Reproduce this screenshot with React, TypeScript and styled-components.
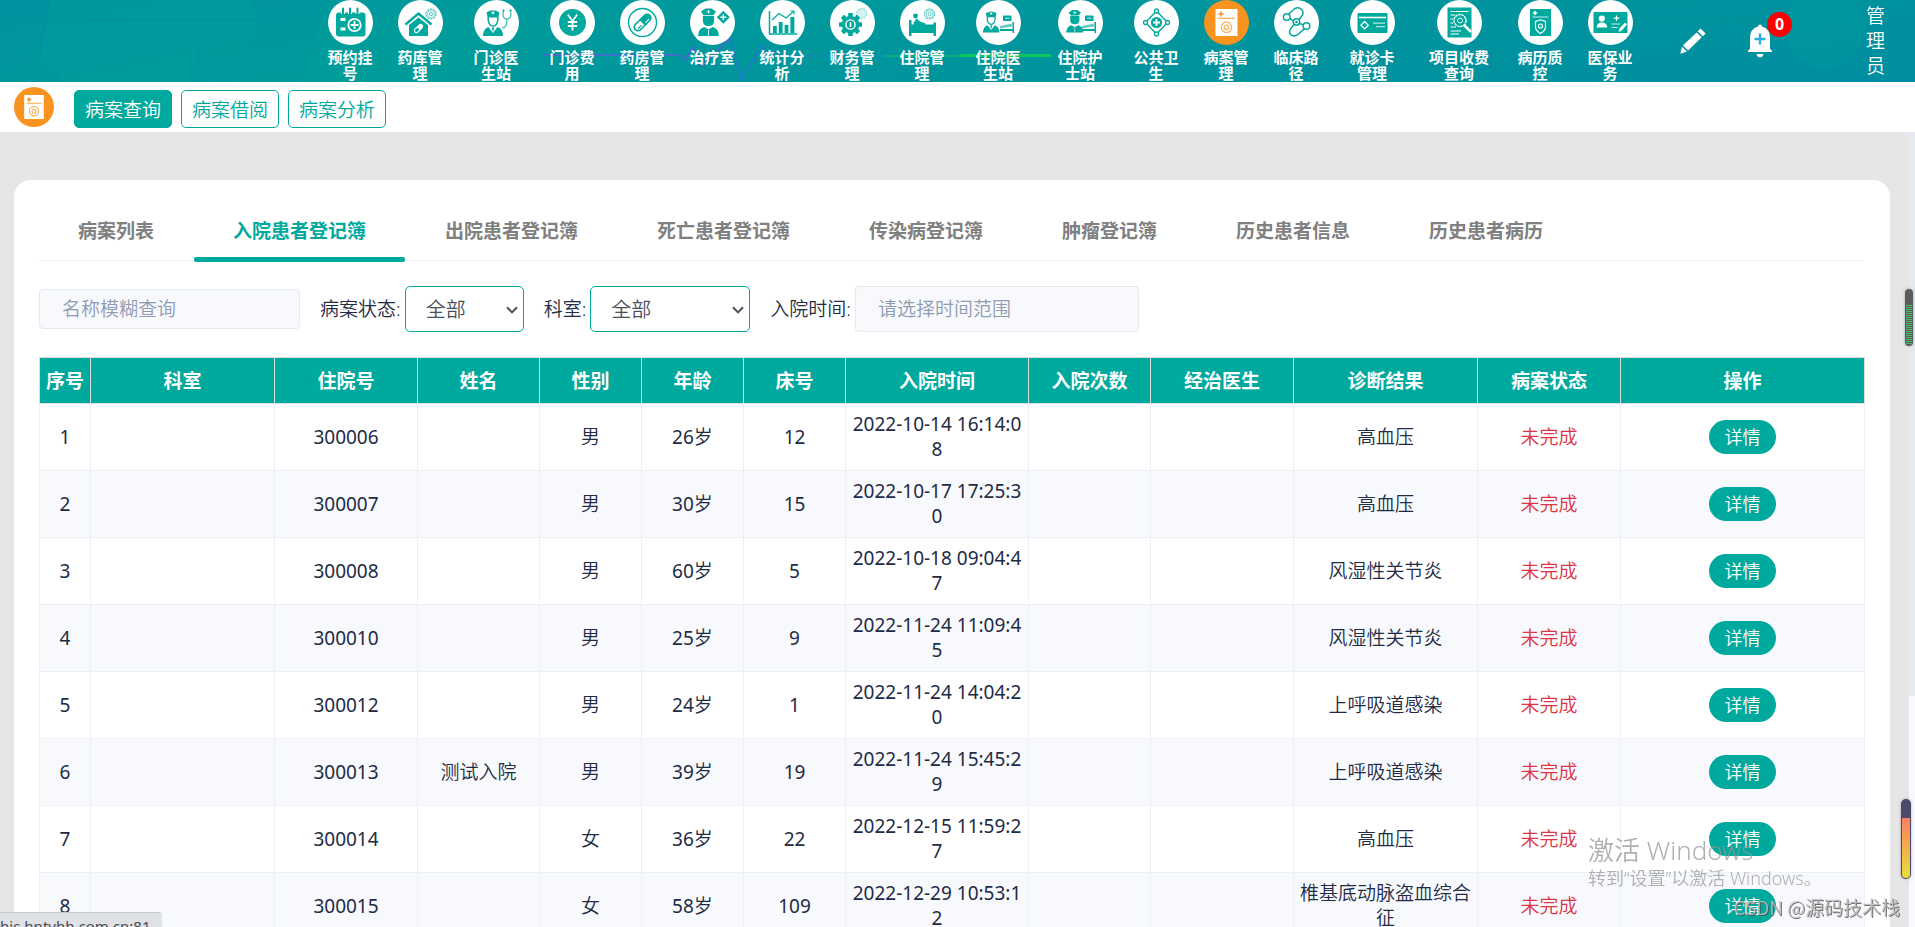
import React from 'react';
import styled, { createGlobalStyle } from 'styled-components';

const TEAL = '#00a99d';
const ORANGE = '#f7931e';
const INK = '#222b45';
const LINE = '#edf1f7';

const GlobalStyle = createGlobalStyle`
  *, *::before, *::after { box-sizing: border-box; }
  body {
    margin: 0;
    background: #e6e6e6;
    color: ${INK};
    font-family: 'Noto Sans', 'Noto Sans CJK SC', sans-serif;
    font-size: 19px;
    font-weight: 350;
    line-height: 25px;
  }
  button, input, select { font: inherit; }
`;

const Page = styled.div`
  display: flex;
  flex-direction: column;
  height: 100vh;
  overflow: hidden;
`;

/* ---------- top bar ---------- */

const TopBar = styled.header`
  position: relative;
  display: flex;
  flex: none;
  height: 82px;
  padding-left: 315px;
  overflow: hidden;
  background: linear-gradient(170deg, #0092a0 0%, #009a9b 30%, #00949d 60%, #008ea0 100%);
`;

const Backdrop = styled.svg`
  position: absolute;
  top: 0;
  left: 0;
`;

const ModuleNav = styled.nav`
  position: relative;
  display: flex;
`;

const ModuleLink = styled.a<{ $width: number }>`
  display: flex;
  flex: none;
  flex-direction: column;
  align-items: center;
  gap: 4px;
  width: ${(p) => p.$width}px;
  color: #fff;
  text-decoration: none;
`;

const ModuleLabel = styled.span<{ $chars: number }>`
  width: ${(p) => p.$chars}em;
  font-size: 15px;
  font-weight: 700;
  line-height: 16px;
  text-align: center;
`;

const TopTools = styled.div`
  position: relative;
  display: flex;
  flex: 1;
  align-items: center;
  justify-content: flex-end;
  padding-right: 29px;
`;

const ToolButton = styled.button<{ $gap: number }>`
  position: relative;
  display: flex;
  margin: 0 ${(p) => p.$gap}px 0 0;
  padding: 0;
  border: 0;
  background: none;
  cursor: pointer;
`;

const Badge = styled.span`
  position: absolute;
  top: -12px;
  right: -20px;
  width: 25px;
  height: 25px;
  border-radius: 50%;
  background: #f00;
  color: #fff;
  font-size: 16px;
  font-weight: 700;
  line-height: 25px;
  text-align: center;
`;

const UserName = styled.span`
  width: 20px;
  color: #fff;
`;

/* ---------- second bar ---------- */

const SubBar = styled.div`
  display: flex;
  flex: none;
  align-items: center;
  gap: 20px;
  height: 50px;
  padding-left: 14px;
  background: #fff;
`;

const SubBarIcon = styled.span`
  display: flex;
`;

const SubButtons = styled.div`
  display: flex;
  gap: 9px;
  padding-top: 4px;
`;

const SubButton = styled.button<{ $active?: boolean }>`
  height: 38px;
  padding: 2px 10px 0;
  border: 1px solid ${TEAL};
  border-radius: 5px;
  background: ${(p) => (p.$active ? TEAL : '#fff')};
  color: ${(p) => (p.$active ? '#fff' : TEAL)};
  cursor: pointer;
`;

/* ---------- content ---------- */

const Body = styled.div`
  display: flex;
  flex: 1;
  min-height: 0;
`;

const Scroller = styled.main`
  flex: 1;
  min-width: 0;
  overflow-y: auto;
  padding: 48px 19px 48px 14px;
  scrollbar-width: none;
`;

const ScrollTrack = styled.div`
  flex: none;
  width: 6px;
  background: #f7f9fc;
`;

const ScrollThumb = styled.div`
  height: 71%;
  background: #e4e9f2;
`;

const Card = styled.section`
  padding: 20px 26px 40px 25px;
  border-radius: 17px;
  background: #fff;
`;

const Tabs = styled.div`
  display: flex;
  gap: 1px;
  border-bottom: 1px solid ${LINE};
`;

const Tab = styled.button<{ $active?: boolean }>`
  position: relative;
  height: 60px;
  padding: 2px 39px 0;
  border: 0;
  background: none;
  color: ${(p) => (p.$active ? TEAL : '#808080')};
  font-weight: 700;
  cursor: pointer;

  &::after {
    content: '';
    display: ${(p) => (p.$active ? 'block' : 'none')};
    position: absolute;
    right: 0;
    bottom: -2px;
    left: 0;
    height: 5px;
    border-radius: 2px;
    background: ${TEAL};
  }
`;

const Filters = styled.form`
  display: flex;
  align-items: center;
  gap: 20px;
  margin: 25px 0;
`;

const Field = styled.label`
  display: flex;
  align-items: center;
  gap: 4px;
`;

const TextInput = styled.input<{ $width: number; $height: number }>`
  width: ${(p) => p.$width}px;
  height: ${(p) => p.$height}px;
  padding: 0 22px;
  border: 1px solid #e4e9f2;
  border-radius: 4px;
  background: #f7f9fc;
  color: ${INK};

  &::placeholder { color: #8f9bb3; opacity: 1; }
`;

const SelectBox = styled.span`
  position: relative;
  display: flex;
`;

const Select = styled.select<{ $width: number }>`
  width: ${(p) => p.$width}px;
  height: 46px;
  padding: 0 24px 0 20px;
  border: 1px solid ${TEAL};
  border-radius: 5px;
  appearance: none;
  background: #fff;
  color: #494f5c;
  font-size: 20px;
`;

const Chevron = styled.svg`
  position: absolute;
  top: 20px;
  right: 6px;
  pointer-events: none;
`;

const Table = styled.table`
  width: 100%;
  border-collapse: collapse;
  table-layout: fixed;
`;

const Th = styled.th`
  padding: 11px 4px 9px;
  border: 1px solid #ddd;
  background: ${TEAL};
  color: #fff;
  font-weight: 700;
  text-align: center;
  white-space: nowrap;
`;

const Td = styled.td<{ $danger?: boolean }>`
  height: 67px;
  padding: 8px 4px;
  border: 1px solid ${LINE};
  color: ${(p) => (p.$danger ? '#dc3545' : INK)};
  text-align: center;
  word-break: break-all;
`;

const Digits = styled.span`
  font-weight: 400;
`;

const Row = styled.tr`
  background: #fff;
  &:nth-child(even) { background: #f7f9fc; }
`;

const DetailButton = styled.button`
  width: 67px;
  height: 34px;
  padding: 0;
  border: 0;
  border-radius: 17px;
  background: ${TEAL};
  color: #fff;
  font-size: 18px;
  vertical-align: middle;
  cursor: pointer;
`;

/* ---------- overlays ---------- */

const StatusBubble = styled.div`
  position: fixed;
  bottom: 0;
  left: 0;
  width: 162px;
  height: 15px;
  overflow: hidden;
  padding-top: 3px;
  border-top: 1px solid #c8cace;
  border-radius: 0 4px 0 0;
  background: #dee1e6;
  color: #4a4d51;
  font-size: 15px;
  font-weight: 400;
  line-height: 20px;
  white-space: nowrap;
`;

const Activation = styled.div`
  position: fixed;
  right: 90px;
  bottom: 37px;
  width: 237px;
  color: rgba(150, 150, 150, 0.75);
  font-size: 18px;
  line-height: 24px;
  white-space: nowrap;
  pointer-events: none;
`;

const ActivationTitle = styled.div`
  font-size: 26px;
  line-height: 32px;
`;

const Signature = styled.div`
  position: fixed;
  right: 15px;
  bottom: 8px;
  color: rgba(190, 190, 190, 0.9);
  font-family: 'Noto Sans CJK SC', sans-serif;
  font-size: 19px;
  text-shadow: 1px 1px 0 rgba(80, 80, 80, 0.8);
  white-space: nowrap;
  pointer-events: none;
`;

const GreenMeter = styled.div`
  position: fixed;
  top: 289px;
  right: 2px;
  width: 8px;
  height: 57px;
  padding: 16px 1px 2px;
  border-radius: 4px;
  background: #5c5c5e;
  box-shadow: 0 0 3px rgba(0, 0, 0, 0.3);

  &::after {
    content: '';
    display: block;
    height: 100%;
    background: repeating-linear-gradient(#3cc168 0 1px, #5c5c5e 1px 2px);
  }
`;

const WarmMeter = styled.div`
  position: fixed;
  right: 4px;
  bottom: 48px;
  width: 10px;
  height: 80px;
  padding: 19px 1px 1px;
  border-radius: 5px;
  background: #4b4a6b;
  box-shadow: 0 0 3px rgba(0, 0, 0, 0.3);

  &::after {
    content: '';
    display: block;
    height: 100%;
    border-radius: 0 0 4px 4px;
    background: linear-gradient(#fa8060, #ecdf3b);
  }
`;

/* ---------- icon drawings, all on a 45 x 45 disc ---------- */

const toothedRing = (cx: number, cy: number, r: number, teeth: number) =>
  Array.from({ length: teeth }, (_, i) => (
    <rect key={i} x={cx - r * 0.2} y={cy - r} width={r * 0.4} height={r * 0.5} rx="0.5"
      transform={`rotate(${(360 / teeth) * i} ${cx} ${cy})`} />
  ));

const SmallGear = ({ x, y }: { x: number; y: number }) => (
  <g opacity="0.65">
    <circle cx={x} cy={y} r="5" fill="none" stroke={TEAL} strokeWidth="1.2" strokeDasharray="2.4 0.7" />
    <circle cx={x} cy={y} r="3.6" fill="none" stroke={TEAL} strokeWidth="0.7" />
    <circle cx={x} cy={y} r="1.6" fill="none" stroke={TEAL} strokeWidth="1" />
  </g>
);

const Doctor = ({ cx }: { cx: number }) => (
  <g fill={TEAL}>
    <path d={`M${cx - 6.5} 12.5 Q${cx} 8 ${cx + 6.5} 12.5 L${cx + 5.3} 17.4 H${cx - 5.3} Z`} />
    <path d={`M${cx - 4.8} 17 V20 Q${cx - 4} 26 ${cx} 26 Q${cx + 4} 26 ${cx + 4.8} 20 V17`} fill="none" stroke={TEAL} strokeWidth="1.5" />
    <path d={`M${cx - 10} 36 Q${cx - 10} 29 ${cx - 4.5} 27 L${cx} 33 L${cx + 4.5} 27 Q${cx + 10} 29 ${cx + 10} 36 Z`} />
    <path d={`M${cx - 1.4} 27.5 H${cx + 1.4} L${cx} 32 Z`} />
    <path d={`M${cx} 11 V14.6 M${cx - 1.8} 12.8 H${cx + 1.8}`} stroke="#fff" strokeWidth="0.9" />
  </g>
);

const Nurse = ({ cx }: { cx: number }) => (
  <g fill={TEAL}>
    <path d={`M${cx - 7.5} 11.5 L${cx - 3} 8.5 H${cx + 3} L${cx + 7.5} 11.5 L${cx + 5} 15.2 H${cx - 5} Z`} />
    <path d={`M${cx - 5.6} 16 H${cx + 5.6} V21 Q${cx + 5.6} 26 ${cx} 26 Q${cx - 5.6} 26 ${cx - 5.6} 21 Z`} />
    <path d={`M${cx - 10.5} 36 Q${cx - 10} 28 ${cx - 4} 27 L${cx} 29.5 L${cx + 4} 27 Q${cx + 10} 28 ${cx + 10.5} 36 Z`} />
    <path d={`M${cx} 10 V13.6 M${cx - 1.8} 11.8 H${cx + 1.8}`} stroke="#fff" strokeWidth="0.9" />
    <path d={`M${cx} 30 V36`} stroke="#fff" strokeWidth="0.8" />
  </g>
);

const SideBed = () => (
  <g fill={TEAL}>
    <rect x="27" y="15.5" width="8.5" height="5.5" rx="0.8" />
    <path d="M29 18.2 H33.5" stroke="#fff" strokeWidth="0.8" />
    <path d="M24 26 L36 23.5 V26.5 L24 28.4 Z" opacity="0.6" />
    <path d="M24 29 H37.5 V31 H24 Z M36.5 22 H38 V33 H36.5 Z" />
  </g>
);

type IconName =
  | 'calendar' | 'house' | 'doctor' | 'yen' | 'pill' | 'nurse' | 'chart' | 'gear' | 'bed'
  | 'doctorBed' | 'nurseBed' | 'network' | 'record' | 'route' | 'card' | 'audit' | 'shield' | 'idCard';

const drawings: Record<IconName, React.ReactNode> = {
  calendar: (
    <>
      <rect x="8" y="12.5" width="29.5" height="24" rx="3" fill={TEAL} />
      <path d="M15 9 V14 M22 9 V14 M29.5 9 V14" stroke="#fff" strokeWidth="4" />
      <path d="M15 8.5 V14 M22 8.5 V14 M29.5 8.5 V14" stroke={TEAL} strokeWidth="2" strokeLinecap="round" />
      <path d="M12.5 19.5 H17.5 M12.5 29 H17.5" stroke="#fff" strokeWidth="3" />
      <circle cx="26.5" cy="25" r="6.2" fill="none" stroke="#fff" strokeWidth="1.8" />
      <path d="M26.5 21 V29 M22.5 25 H30.5" stroke="#fff" strokeWidth="1.8" />
    </>
  ),
  house: (
    <>
      <path d="M7.5 24.5 L20.5 13.5 L33.5 24.5" fill="none" stroke={TEAL} strokeWidth="2.4" />
      <path d="M11 25 L20.5 17.5 L30 25 V36 H11 Z" fill={TEAL} />
      <g transform="rotate(45 20.5 28.5)">
        <rect x="18" y="23" width="5" height="11" rx="2.5" fill="#fff" />
        <rect x="19" y="28.5" width="3" height="4.4" rx="1.5" fill={TEAL} />
      </g>
      <SmallGear x={33} y={14} />
    </>
  ),
  doctor: (
    <>
      <Doctor cx={19} />
      <path d="M29.5 11 Q28 19 32.5 19 Q38 19 36.5 11 M32.5 19 Q34 27 28.5 28" fill="none" stroke={TEAL} strokeWidth="1.3" opacity="0.75" />
      <circle cx="29.5" cy="10.5" r="1.1" fill={TEAL} />
      <circle cx="36.5" cy="10.5" r="1.1" fill={TEAL} />
    </>
  ),
  yen: (
    <>
      <circle cx="22.5" cy="22.5" r="13.5" fill={TEAL} />
      <path d="M17.8 14.5 L22.5 21 L27.2 14.5 M22.5 21 V30.5 M17.8 22 H27.2 M17.8 26 H27.2" fill="none" stroke="#fff" strokeWidth="1.8" />
    </>
  ),
  pill: (
    <>
      <circle cx="22.5" cy="22.5" r="14" fill="none" stroke={TEAL} strokeWidth="1.4" />
      <g transform="rotate(45 22.5 22.5)">
        <rect x="18" y="11.5" width="9" height="22" rx="4.5" fill={TEAL} />
        <path d="M19.6 23 H25.4 V28.8 A2.9 2.9 0 0 1 19.6 28.8 Z" fill="#fff" />
        <path d="M23.8 25 V30" stroke={TEAL} strokeWidth="1.2" />
        <path d="M24.8 15.5 V20.5" stroke="#fff" strokeWidth="1" />
      </g>
    </>
  ),
  nurse: (
    <>
      <Nurse cx={18.5} />
      <rect x="28.7" y="12.7" width="9.2" height="9.2" fill={TEAL} transform="rotate(45 33.3 17.3)" />
      <path d="M33.3 14.3 V20.3 M30.3 17.3 H36.3" stroke="#fff" strokeWidth="1.5" />
    </>
  ),
  chart: (
    <>
      <path d="M9.5 11 V34 H37.5" fill="none" stroke={TEAL} strokeWidth="1.5" />
      <path d="M13 26 H16.8 V33 H13 Z M18.8 22 H22.6 V33 H18.8 Z M24.6 25 H28.4 V33 H24.6 Z M30.4 17 H34.4 V33 H30.4 Z" fill={TEAL} />
      <path d="M12 20 L19 13.5 L26 18 L33.5 11.5" fill="none" stroke={TEAL} strokeWidth="1.3" />
      <path d="M30.5 11 H34 V14.5" fill="none" stroke={TEAL} strokeWidth="1.1" />
    </>
  ),
  gear: (
    <>
      <g fill={TEAL}>
        {toothedRing(20.5, 24.5, 11.5, 8)}
        <circle cx="20.5" cy="24.5" r="8.8" />
      </g>
      <circle cx="20.5" cy="24.5" r="4.6" fill="none" stroke="#fff" strokeWidth="1.4" />
      <path d="M20.5 22 V27" stroke="#fff" strokeWidth="1.6" />
      <g opacity="0.6"><SmallGear x={31.5} y={13.5} /></g>
    </>
  ),
  bed: (
    <>
      <circle cx="15.5" cy="16" r="2.4" fill={TEAL} />
      <path d="M13.5 23 L16.5 18.5 L20 21.5 L25.5 23.5 V25.5 H13.5 Z" fill={TEAL} />
      <path d="M9 20 H11.5 V24.5 H33.5 V22.5 H36 V36 H33.5 V33 H11.5 V36 H9 Z" fill={TEAL} />
      <SmallGear x={29.5} y={14} />
    </>
  ),
  doctorBed: (<><SideBed /><g transform="translate(0 3) scale(.82)"><Doctor cx={18.5} /></g></>),
  nurseBed: (<><SideBed /><g transform="translate(0 3) scale(.82)"><Nurse cx={20.5} /></g></>),
  network: (
    <>
      <path d="M22.5 11 L33.5 22.5 L22.5 34 L11.5 22.5 Z" fill="none" stroke={TEAL} strokeWidth="1.4" />
      <g fill="#fff" stroke={TEAL} strokeWidth="1.3">
        <circle cx="22.5" cy="11" r="2" /><circle cx="33.5" cy="22.5" r="2" />
        <circle cx="22.5" cy="34" r="2" /><circle cx="11.5" cy="22.5" r="2" />
      </g>
      <circle cx="22.5" cy="22.5" r="5.6" fill={TEAL} />
      <path d="M22.5 19 V26 M19 22.5 H26" stroke="#fff" strokeWidth="1.8" />
    </>
  ),
  record: (
    <>
      <rect x="11.5" y="9" width="22" height="27" fill="#fff" />
      <path d="M17 11.5 V16.5 M14.5 14 H19.5" stroke={ORANGE} strokeWidth="1.6" />
      <path d="M14 18.3 H31" stroke={ORANGE} strokeWidth="0.9" />
      <circle cx="22.5" cy="27.3" r="5.2" fill="none" stroke={ORANGE} strokeWidth="1.2" opacity="0.75" />
      <circle cx="22.5" cy="27.3" r="2.3" fill="none" stroke={ORANGE} strokeWidth="1.2" opacity="0.75" />
    </>
  ),
  route: (
    <>
      <g fill="none" stroke={TEAL} strokeWidth="1.5">
        <path d="M14.5 14.2 L20.5 8.8 Q24 6.8 27 9 Q30.5 12 28 15.8 L25 19.8" />
        <path d="M20 24.4 L16.5 29 Q14.2 33 17.5 35.2 Q21.5 37 24.5 34 L30.5 28.6" />
        <path d="M15.8 18.4 L19.4 20.8 M25.6 23.4 L29.4 25" />
        <circle cx="12.7" cy="17" r="3.3" />
        <circle cx="32.5" cy="26" r="3.3" />
        <circle cx="22.5" cy="22" r="3.2" />
      </g>
      <circle cx="22.5" cy="22" r="1.3" fill={TEAL} />
    </>
  ),
  card: (
    <>
      <rect x="7.5" y="13" width="30" height="20" rx="1" fill={TEAL} />
      <path d="M9 17.5 H36" stroke="#fff" strokeWidth="1.6" />
      <path d="M23 23.2 H35 M26 26.7 H35" stroke="#fff" strokeWidth="1.3" opacity="0.7" />
      <rect x="12" y="22.6" width="5.2" height="5.2" fill="none" stroke="#fff" strokeWidth="1.3" transform="rotate(45 14.6 25.2)" />
    </>
  ),
  audit: (
    <>
      <rect x="10.5" y="7.5" width="24" height="30" fill={TEAL} />
      <path d="M13.5 11.5 H31.5 M13.5 15 H18 M13.5 19 H16 M13.5 23 H16 M13.5 27 H19 M13.5 31 H24 M13.5 34 H22" stroke="#fff" strokeWidth="1.1" />
      <circle cx="23" cy="20.5" r="6" fill="none" stroke="#fff" strokeWidth="1.4" strokeDasharray="2.6 0.6" />
      <circle cx="23" cy="20.5" r="2.5" fill="none" stroke="#fff" strokeWidth="1" />
      <path d="M27 25 L34 32" stroke="#fff" strokeWidth="2.6" />
    </>
  ),
  shield: (
    <>
      <rect x="12" y="9" width="21" height="27" fill={TEAL} />
      <path d="M17 10.8 V15.2 M14.8 13 H19.2" stroke="#fff" strokeWidth="1.4" />
      <path d="M14.5 17 H30.5" stroke="#fff" strokeWidth="0.8" />
      <path d="M22.5 19.8 L27.5 21.5 V26.5 Q27.5 30.8 22.5 33.5 Q17.5 30.8 17.5 26.5 V21.5 Z" fill="none" stroke="#fff" strokeWidth="1.2" />
      <circle cx="22.5" cy="26" r="2" fill="none" stroke="#fff" strokeWidth="1.2" />
    </>
  ),
  idCard: (
    <>
      <rect x="5.5" y="12" width="34" height="21" rx="1" fill={TEAL} />
      <circle cx="13.8" cy="18.6" r="3.1" fill="#fff" />
      <path d="M8.5 27.5 Q9 22.5 13.8 22.5 Q18.8 22.5 19.3 27.5 Z" fill="#fff" />
      <path d="M28.5 15.5 V21 M25.8 18.2 H31.2" stroke="#fff" strokeWidth="1.2" />
      <path d="M23.5 24 H32 M23.5 27.5 H29.5" stroke="#fff" strokeWidth="1.2" opacity="0.8" />
      <path d="M30.5 32 L31.5 28.5 L37 22.5 L39 24.5 L33.8 30.5 Z" fill="#fff" />
    </>
  ),
};

const DiscIcon = ({ name, size = 45 }: { name: IconName; size?: number }) => (
  <svg width={size} height={size} viewBox="0 0 45 45" aria-hidden="true">
    <circle cx="22.5" cy="22.5" r="22.5" fill={name === 'record' ? ORANGE : '#fff'} />
    {drawings[name]}
  </svg>
);

const TopBackdrop = () => (
  <Backdrop width="1915" height="82" viewBox="0 0 1915 82" aria-hidden="true">
    <g fill="#00a39a" opacity="0.3">
      <path d="M50 0 L190 0 L200 40 L190 82 L62 82 L40 60 Z" />
      <circle cx="222" cy="22" r="34" />
      <path d="M330 0 H520 L480 82 H300 Z" />
      <circle cx="1825" cy="28" r="40" />
    </g>
    <path d="M0 60 L38 60 Q52 66 60 82 M50 0 L38 60 M0 20 H300 M1600 20 H1800 M1727 0 V82" fill="none" stroke="#00838f" strokeWidth="1" opacity="0.35" />
    <path d="M543 55 H680 L685 60 L693 47 L702 66 L730 38" fill="none" stroke="#4468cc" strokeWidth="2" opacity="0.85" />
    <path d="M730 38 L741 80 L762 45 L768 55 L775 51 L781 56" fill="none" stroke="#1c7ccb" strokeWidth="2" opacity="0.9" />
    <path d="M781 56 H885" fill="none" stroke="#0f8fae" strokeWidth="2" />
    <path d="M885 56 H960" fill="none" stroke="#06b07c" strokeWidth="2" />
    <path d="M960 55.5 H1051" fill="none" stroke="#0cc75c" strokeWidth="3" />
  </Backdrop>
);

const PencilIcon = () => (
  <svg width="26" height="26" viewBox="0 0 26 26" fill="#fff" aria-hidden="true">
    <path d="M20.5 0.5 L25.6 5.4 L22.8 8.2 L17.7 3.3 Z" />
    <path d="M16.6 4.4 L21.7 9.3 L8.2 22.4 L2.9 17.6 Z" />
    <path d="M2 18.8 L7 23.5 L0.3 25.8 Z" />
  </svg>
);

const BellIcon = () => (
  <svg width="24" height="34" viewBox="0 0 24 34" aria-hidden="true">
    <path d="M12 0.5 A2 2 0 0 1 14 2.6 Q22 5 22 14 V25 L24 26.5 V28 H0 V26.5 L2 25 V14 Q2 5 10 2.6 A2 2 0 0 1 12 0.5 Z" fill="#fff" />
    <path d="M8.5 30 H15.5 Q14.5 33.5 12 33.5 Q9.5 33.5 8.5 30 Z" fill="#fff" />
    <path d="M12 9.5 V20.5 M6.5 15 H17.5" stroke="#29abe2" strokeWidth="2.4" />
  </svg>
);

const AllSelect = ({ width }: { width: number }) => (
  <SelectBox>
    <Select $width={width}><option>全部</option></Select>
    <Chevron width="12" height="8" viewBox="0 0 12 8" aria-hidden="true">
      <path d="M1 1.2 L6 6.4 L11 1.2" fill="none" stroke="#494f5c" strokeWidth="2" />
    </Chevron>
  </SelectBox>
);

/* ---------- data ---------- */

const modules: { label: string; icon: IconName }[] = [
  { label: '预约挂号', icon: 'calendar' },
  { label: '药库管理', icon: 'house' },
  { label: '门诊医生站', icon: 'doctor' },
  { label: '门诊费用', icon: 'yen' },
  { label: '药房管理', icon: 'pill' },
  { label: '治疗室', icon: 'nurse' },
  { label: '统计分析', icon: 'chart' },
  { label: '财务管理', icon: 'gear' },
  { label: '住院管理', icon: 'bed' },
  { label: '住院医生站', icon: 'doctorBed' },
  { label: '住院护士站', icon: 'nurseBed' },
  { label: '公共卫生', icon: 'network' },
  { label: '病案管理', icon: 'record' },
  { label: '临床路径', icon: 'route' },
  { label: '就诊卡管理', icon: 'card' },
  { label: '项目收费查询', icon: 'audit' },
  { label: '病历质控', icon: 'shield' },
  { label: '医保业务', icon: 'idCard' },
];

const moduleWidth = (label: string) => {
  if (label.length > 5) return 92;
  return label.length === 5 ? 82 : 70;
};

const tabs = ['病案列表', '入院患者登记簿', '出院患者登记簿', '死亡患者登记簿', '传染病登记簿', '肿瘤登记簿', '历史患者信息', '历史患者病历'];

const columns: [string, number][] = [
  ['序号', 51], ['科室', 184], ['住院号', 143], ['姓名', 122], ['性别', 102], ['年龄', 102], ['床号', 102],
  ['入院时间', 183], ['入院次数', 122], ['经治医生', 143], ['诊断结果', 184], ['病案状态', 143], ['操作', 244],
];

const patients = [
  { no: '300006', name: '', sex: '男', age: 26, bed: 12, time: '2022-10-14 16:14:08', diagnosis: '高血压' },
  { no: '300007', name: '', sex: '男', age: 30, bed: 15, time: '2022-10-17 17:25:30', diagnosis: '高血压' },
  { no: '300008', name: '', sex: '男', age: 60, bed: 5, time: '2022-10-18 09:04:47', diagnosis: '风湿性关节炎' },
  { no: '300010', name: '', sex: '男', age: 25, bed: 9, time: '2022-11-24 11:09:45', diagnosis: '风湿性关节炎' },
  { no: '300012', name: '', sex: '男', age: 24, bed: 1, time: '2022-11-24 14:04:20', diagnosis: '上呼吸道感染' },
  { no: '300013', name: '测试入院', sex: '男', age: 39, bed: 19, time: '2022-11-24 15:45:29', diagnosis: '上呼吸道感染' },
  { no: '300014', name: '', sex: '女', age: 36, bed: 22, time: '2022-12-15 11:59:27', diagnosis: '高血压' },
  { no: '300015', name: '', sex: '女', age: 58, bed: 109, time: '2022-12-29 10:53:12', diagnosis: '椎基底动脉盗血综合征' },
];

export default function App() {
  return (
    <Page>
      <GlobalStyle />
      <TopBar>
        <TopBackdrop />
        <ModuleNav>
          {modules.map((m) => (
            <ModuleLink key={m.label} href="#" $width={moduleWidth(m.label)}>
              <DiscIcon name={m.icon} />
              <ModuleLabel $chars={m.label.length > 5 ? 4 : 3}>{m.label}</ModuleLabel>
            </ModuleLink>
          ))}
        </ModuleNav>
        <TopTools>
          <ToolButton type="button" aria-label="编辑" $gap={42}><PencilIcon /></ToolButton>
          <ToolButton type="button" aria-label="通知" $gap={94}>
            <BellIcon />
            <Badge>0</Badge>
          </ToolButton>
          <UserName>管理员</UserName>
        </TopTools>
      </TopBar>

      <SubBar>
        <SubBarIcon><DiscIcon name="record" size={40} /></SubBarIcon>
        <SubButtons>
          <SubButton type="button" $active>病案查询</SubButton>
          <SubButton type="button">病案借阅</SubButton>
          <SubButton type="button">病案分析</SubButton>
        </SubButtons>
      </SubBar>

      <Body>
        <Scroller>
          <Card>
            <Tabs role="tablist">
              {tabs.map((t, i) => (
                <Tab key={t} type="button" role="tab" aria-selected={i === 1} $active={i === 1}>{t}</Tab>
              ))}
            </Tabs>
            <Filters>
              <TextInput $width={261} $height={40} type="text" placeholder="名称模糊查询" aria-label="名称模糊查询" />
              <Field>
                病案状态:
                <AllSelect width={119} />
              </Field>
              <Field>
                科室:
                <AllSelect width={160} />
              </Field>
              <Field>
                入院时间:
                <TextInput $width={284} $height={46} type="text" placeholder="请选择时间范围" />
              </Field>
            </Filters>
            <Table>
              <colgroup>
                {columns.map(([title, width]) => <col key={title} width={width} />)}
              </colgroup>
              <thead>
                <tr>{columns.map(([title]) => <Th key={title} scope="col">{title}</Th>)}</tr>
              </thead>
              <tbody>
                {patients.map((p, i) => (
                  <Row key={p.no}>
                    <Td><Digits>{i + 1}</Digits></Td>
                    <Td />
                    <Td><Digits>{p.no}</Digits></Td>
                    <Td>{p.name}</Td>
                    <Td>{p.sex}</Td>
                    <Td><Digits>{p.age}</Digits>岁</Td>
                    <Td><Digits>{p.bed}</Digits></Td>
                    <Td><Digits>{p.time}</Digits></Td>
                    <Td />
                    <Td />
                    <Td>{p.diagnosis}</Td>
                    <Td $danger>未完成</Td>
                    <Td><DetailButton type="button">详情</DetailButton></Td>
                  </Row>
                ))}
              </tbody>
            </Table>
          </Card>
        </Scroller>
        <ScrollTrack><ScrollThumb /></ScrollTrack>
      </Body>

      <StatusBubble>his.hntyhh.com.cn:81</StatusBubble>
      <Activation>
        <ActivationTitle>激活 Windows</ActivationTitle>
        转到“设置”以激活 Windows。
      </Activation>
      <Signature>CSDN @源码技术栈</Signature>
      <GreenMeter />
      <WarmMeter />
    </Page>
  );
}
